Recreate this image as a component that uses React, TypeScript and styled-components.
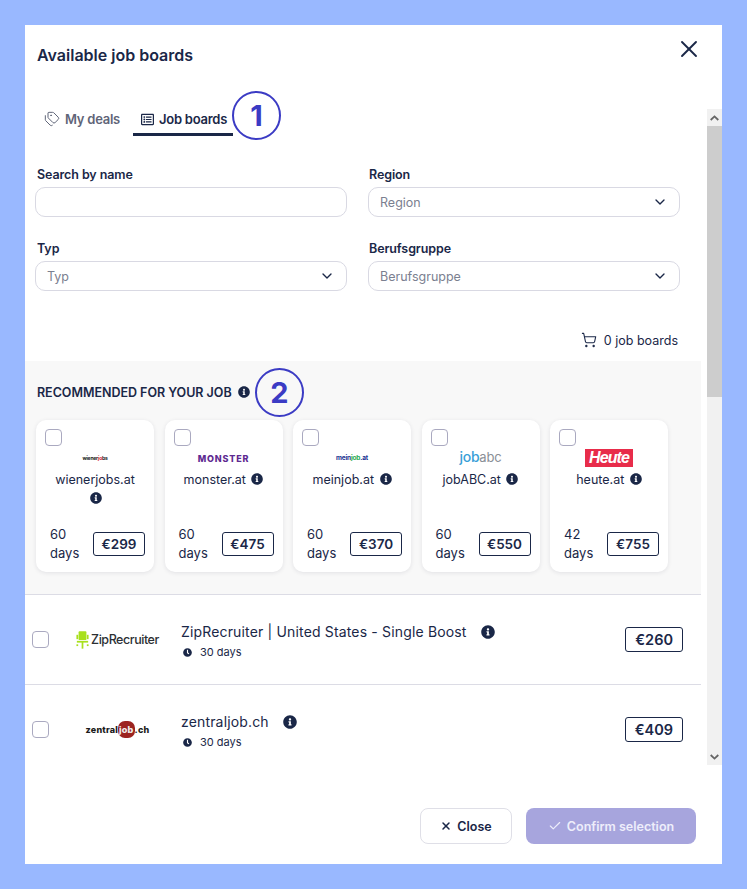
import styled, { createGlobalStyle } from 'styled-components'
import { Check, ChevronDown, ShoppingCart, Tags, X } from 'lucide-react'
import { FaClock, FaInfoCircle, FaRegListAlt } from 'react-icons/fa'
import type { ReactNode } from 'react'

const Global = createGlobalStyle`
  html, body { margin: 0; padding: 0; }
  body { font-family: Inter, "Liberation Sans", sans-serif; color: #1a2747; }
  * { box-sizing: border-box; }
`
const Page = styled.div`
  width: 747px;
  height: 889px;
  padding: 25px;
  background: #99b8ff;
  overflow: hidden;
`
const Modal = styled.div`
  position: relative;
  width: 697px;
  height: 839px;
  background: #fff;
  display: flex;
  flex-direction: column;
`
const Header = styled.div`
  height: 84px;
  flex: none;
  padding: 21px 19px 0 12px;
  display: flex;
  justify-content: space-between;
  align-items: flex-start;
`
const Title = styled.h2`
  margin: 0;
  font-size: 16px;
  line-height: 18px;
  font-weight: 600;
`
const CloseIcon = styled.span`
  display: flex;
  margin-top: -11px;
`
const ScrollArea = styled.div`
  height: 656px;
  flex: none;
  display: flex;
`
const Scroller = styled.div`
  width: 682px;
  flex: none;
  overflow: hidden;
`
const ScrollTrack = styled.div`
  width: 15px;
  flex: none;
  background: #f1f1f1;
  display: flex;
  flex-direction: column;
  justify-content: space-between;
`
const ScrollThumb = styled.div`
  height: 271px;
  background: #cdcdcd;
  margin-bottom: auto;
`
const ScrollArrow = styled.div`
  height: 17px;
  flex: none;
  display: flex;
  align-items: center;
  justify-content: center;
`
const Tabs = styled.div`
  display: flex;
  height: 27px;
  padding-left: 11px;
  gap: 5px;
`
const Tab = styled.div<{ $active?: boolean }>`
  display: flex;
  align-items: center;
  gap: 5px;
  height: 27px;
  padding: 0 ${p => (p.$active ? '6px' : '8px')} 4px 8px;
  font-size: 13px;
  font-weight: 600;
  letter-spacing: -0.25px;
  color: ${p => (p.$active ? '#1a2747' : '#5f6578')};
  border-bottom: 3px solid ${p => (p.$active ? '#1a2747' : 'transparent')};
`
const Annotation = styled.div<{ $left: number; $top: number }>`
  position: absolute;
  left: ${p => p.$left}px;
  top: ${p => p.$top}px;
  width: 49px;
  height: 49px;
  border: 2px solid #3b3bc4;
  border-radius: 50%;
  display: flex;
  align-items: center;
  justify-content: center;
  font-size: 29px;
  font-weight: 700;
  color: #3b3bc4;
`
const Filters = styled.div`
  display: grid;
  grid-template-columns: 312px 312px;
  column-gap: 21px;
  row-gap: 24px;
  padding: 31px 0 0 10px;
`
const Field = styled.div`
  display: flex;
  flex-direction: column;
`
const Label = styled.label<{ $inset: number }>`
  font-size: 12.5px;
  line-height: 16px;
  font-weight: 600;
  letter-spacing: -0.1px;
  margin: 0 0 4px ${p => p.$inset}px;
`
const Input = styled.input`
  width: 312px;
  height: 30px;
  border: 1px solid #d9d9e3;
  border-radius: 10px;
  outline: none;
  background: #fff;
`
const Select = styled.div`
  width: 312px;
  height: 30px;
  border: 1px solid #d9d9e3;
  border-radius: 10px;
  padding: 0 11px;
  display: flex;
  align-items: center;
  justify-content: space-between;
  font-size: 12.5px;
  color: #7b8090;
`
const CartRow = styled.div`
  display: flex;
  justify-content: flex-end;
  align-items: center;
  gap: 7px;
  height: 18px;
  margin-top: 40px;
  padding-right: 29px;
  font-size: 12.5px;
`
const Recommended = styled.section`
  width: 676px;
  height: 233px;
  margin-top: 12px;
  background: #f8f8f8;
  padding: 23px 0 0 11px;
`
const RecTitle = styled.div`
  display: flex;
  align-items: center;
  gap: 6px;
  height: 16px;
  padding-left: 1px;
  font-size: 12.5px;
  font-weight: 600;
  letter-spacing: -0.03px;
  text-transform: uppercase;
`
const Cards = styled.div`
  display: flex;
  gap: 10.5px;
  margin-top: 20px;
`
const Card = styled.div`
  width: 118px;
  height: 152px;
  background: #fff;
  border-radius: 10px;
  box-shadow: 0 1px 4px rgba(30, 30, 60, 0.1);
  padding: 9px 9px 9px;
  display: flex;
  flex-direction: column;
`
const Box = styled.span`
  display: block;
  width: 17px;
  height: 17px;
  flex: none;
  border: 1px solid #aaa9c0;
  border-radius: 4px;
  background: #fff;
`
const CardLogo = styled.div`
  height: 22px;
  margin-top: 1px;
  display: flex;
  align-items: center;
  justify-content: center;
`
const CardName = styled.div`
  margin-top: 1px;
  padding: 0 5px;
  font-size: 12.5px;
  line-height: 19px;
  text-align: center;
`
const InfoIcon = styled(FaInfoCircle)`
  color: #1a2747;
  vertical-align: -1px;
  flex: none;
`
const CardInfoIcon = styled(InfoIcon)`
  margin-left: 2px;
`
const CardFoot = styled.div`
  margin-top: auto;
  padding-left: 5px;
  display: flex;
  align-items: center;
  justify-content: space-between;
  font-size: 13px;
  line-height: 19px;
`
const Days = styled.span`
  width: 30px;
`
const Price = styled.span<{ $large?: boolean }>`
  display: flex;
  align-items: center;
  justify-content: center;
  flex: none;
  border: 1px solid #1a2747;
  border-radius: 3px;
  font-weight: 600;
  padding: 0 ${p => (p.$large ? '9px' : '0')};
  width: ${p => (p.$large ? 'auto' : '52px')};
  height: ${p => (p.$large ? '25px' : '24px')};
  font-size: ${p => (p.$large ? '14.5px' : '13.5px')};
`
const List = styled.div`
  width: 676px;
`
const Row = styled.div`
  height: 90px;
  border-top: 1px solid #dcdce5;
  display: flex;
  align-items: center;
  padding: 0 18px 0 7px;
`
const RowLogo = styled.div`
  width: 85px;
  margin-left: 26px;
  margin-right: 21px;
  flex: none;
  display: flex;
  align-items: center;
  justify-content: center;
`
const RowBody = styled.div`
  flex: 1;
  margin-top: 3px;
`
const RowName = styled.div`
  display: flex;
  align-items: center;
  gap: 14px;
  font-size: 14px;
  line-height: 20px;
  letter-spacing: 0.16px;
`
const RowDays = styled.div`
  display: flex;
  align-items: center;
  gap: 8px;
  margin-top: 2px;
  padding-left: 2px;
  font-size: 11px;
  line-height: 16px;
`
const Footer = styled.div`
  flex: 1;
  display: flex;
  justify-content: flex-end;
  gap: 14px;
  padding: 43px 26px 0 0;
`
const Button = styled.button<{ $primary?: boolean }>`
  height: 36px;
  width: ${p => (p.$primary ? '170px' : '92px')};
  border: ${p => (p.$primary ? 'none' : '1px solid #dfdfe7')};
  border-radius: 8px;
  background: ${p => (p.$primary ? '#a7a5dd' : '#fff')};
  color: ${p => (p.$primary ? '#eeeefb' : '#1a2747')};
  font: 600 12.5px Inter, sans-serif;
  display: flex;
  align-items: center;
  justify-content: center;
  gap: 5px;
`
const LogoText = styled.span<{ $color: string; $size: number; $weight?: number }>`
  color: ${p => p.$color};
  font-size: ${p => p.$size}px;
  font-weight: ${p => p.$weight ?? 700};
  white-space: nowrap;
  letter-spacing: -0.2px;
`
const Accent = styled.span<{ $color: string }>`
  color: ${p => p.$color};
`
const MonsterLogo = styled.span`
  color: #5e2a91;
  font-size: 9px;
  font-weight: 800;
  letter-spacing: 0.8px;
`
const HeuteLogo = styled.span`
  width: 48px;
  height: 18px;
  background: #e82c4a;
  color: #fff;
  display: flex;
  align-items: center;
  justify-content: center;
  font: italic 700 16px "Liberation Sans", sans-serif;
  letter-spacing: -0.9px;
`
const JobAbcLogo = styled.span`
  display: flex;
  align-items: baseline;
  font-size: 14px;
  letter-spacing: -0.3px;
  color: #3a9fd8;
  font-weight: 500;
  margin-top: -4px;
`
const ZipLogo = styled.span`
  display: flex;
  align-items: center;
  gap: 2px;
  color: #2c2f33;
  font-size: 12.5px;
  font-weight: 500;
  letter-spacing: -0.45px;
`
const ZentralLogo = styled.span`
  font-size: 9px;
  font-weight: 800;
  color: #1c1c1c;
  letter-spacing: 0.2px;
`
const Blob = styled.em`
  font-style: normal;
  color: #eee;
  background: #9c2420;
  border-radius: 7px;
  padding: 3px 1px;
`

const ZipChair = () => (
  <svg width="13" height="18" viewBox="0 0 15 20" fill="#a8e01c">
    <rect x="3" y="0" width="9" height="10" rx="1" />
    <rect x="0.5" y="4" width="2" height="5" />
    <rect x="12.5" y="4" width="2" height="5" />
    <rect x="1" y="11" width="13" height="2" />
    <rect x="6.5" y="12" width="2" height="8" />
    <rect x="0.5" y="15" width="2" height="2" />
    <rect x="12.5" y="15" width="2" height="2" />
  </svg>
)

const ArrowGlyph = ({ up }: { up?: boolean }) => (
  <svg width="9" height="6" viewBox="0 0 9 6" fill="none" stroke="#666" strokeWidth="1.8">
    <path d={up ? 'M0.7 5 L4.5 1.4 L8.3 5' : 'M0.7 1 L4.5 4.6 L8.3 1'} />
  </svg>
)

type Deal = { name: string; days: string; price: string; logo: ReactNode }

const deals: Deal[] = [
  { name: 'wienerjobs.at', days: '60 days', price: '€299', logo: <LogoText $color="#222" $size={5}>wiener<Accent $color="#d4202c">jo</Accent>bs</LogoText> },
  { name: 'monster.at', days: '60 days', price: '€475', logo: <MonsterLogo>MONSTER</MonsterLogo> },
  { name: 'meinjob.at', days: '60 days', price: '€370', logo: <LogoText $color="#16308f" $size={6.5}>mein<Accent $color="#1aa84a">job</Accent>.at</LogoText> },
  { name: 'jobABC.at', days: '60 days', price: '€550', logo: <JobAbcLogo>job<LogoText $color="#8a8f96" $size={13} $weight={400}>abc</LogoText></JobAbcLogo> },
  { name: 'heute.at', days: '42 days', price: '€755', logo: <HeuteLogo>Heute</HeuteLogo> },
]

const boards: Deal[] = [
  { name: 'ZipRecruiter | United States - Single Boost', days: '30 days', price: '€260', logo: <ZipLogo><ZipChair />ZipRecruiter</ZipLogo> },
  { name: 'zentraljob.ch', days: '30 days', price: '€409', logo: <ZentralLogo>zentral<Blob>job</Blob>.ch</ZentralLogo> },
]

export default function App() {
  return (
    <Page>
      <Global />
      <Modal>
        <Header>
          <Title>Available job boards</Title>
          <CloseIcon><X size={28} strokeWidth={1.6} /></CloseIcon>
        </Header>
        <ScrollArea>
          <Scroller>
            <Tabs>
              <Tab><Tags size={16} strokeWidth={1.5} />My deals</Tab>
              <Tab $active><FaRegListAlt size={13} />Job boards</Tab>
            </Tabs>
            <Filters>
              <Field>
                <Label $inset={2}>Search by name</Label>
                <Input />
              </Field>
              <Field>
                <Label $inset={1}>Region</Label>
                <Select>Region<ChevronDown size={16} color="#1a2747" /></Select>
              </Field>
              <Field>
                <Label $inset={2}>Typ</Label>
                <Select>Typ<ChevronDown size={16} color="#1a2747" /></Select>
              </Field>
              <Field>
                <Label $inset={1}>Berufsgruppe</Label>
                <Select>Berufsgruppe<ChevronDown size={16} color="#1a2747" /></Select>
              </Field>
            </Filters>
            <CartRow><ShoppingCart size={16} strokeWidth={1.6} />0 job boards</CartRow>
            <Recommended>
              <RecTitle>Recommended for your job <InfoIcon size={12} /></RecTitle>
              <Cards>
                {deals.map(d => (
                  <Card key={d.name}>
                    <Box />
                    <CardLogo>{d.logo}</CardLogo>
                    <CardName>{d.name} <CardInfoIcon size={12} /></CardName>
                    <CardFoot>
                      <Days>{d.days}</Days>
                      <Price>{d.price}</Price>
                    </CardFoot>
                  </Card>
                ))}
              </Cards>
            </Recommended>
            <List>
              {boards.map(b => (
                <Row key={b.name}>
                  <Box />
                  <RowLogo>{b.logo}</RowLogo>
                  <RowBody>
                    <RowName>{b.name}<InfoIcon size={14} /></RowName>
                    <RowDays><FaClock size={9} />{b.days}</RowDays>
                  </RowBody>
                  <Price $large>{b.price}</Price>
                </Row>
              ))}
            </List>
          </Scroller>
          <ScrollTrack>
            <ScrollArrow><ArrowGlyph up /></ScrollArrow>
            <ScrollThumb />
            <ScrollArrow><ArrowGlyph /></ScrollArrow>
          </ScrollTrack>
        </ScrollArea>
        <Footer>
          <Button><X size={12} strokeWidth={3} />Close</Button>
          <Button $primary><Check size={14} strokeWidth={2} />Confirm selection</Button>
        </Footer>
        <Annotation $left={207} $top={66}>1</Annotation>
        <Annotation $left={230} $top={343}>2</Annotation>
      </Modal>
    </Page>
  )
}
